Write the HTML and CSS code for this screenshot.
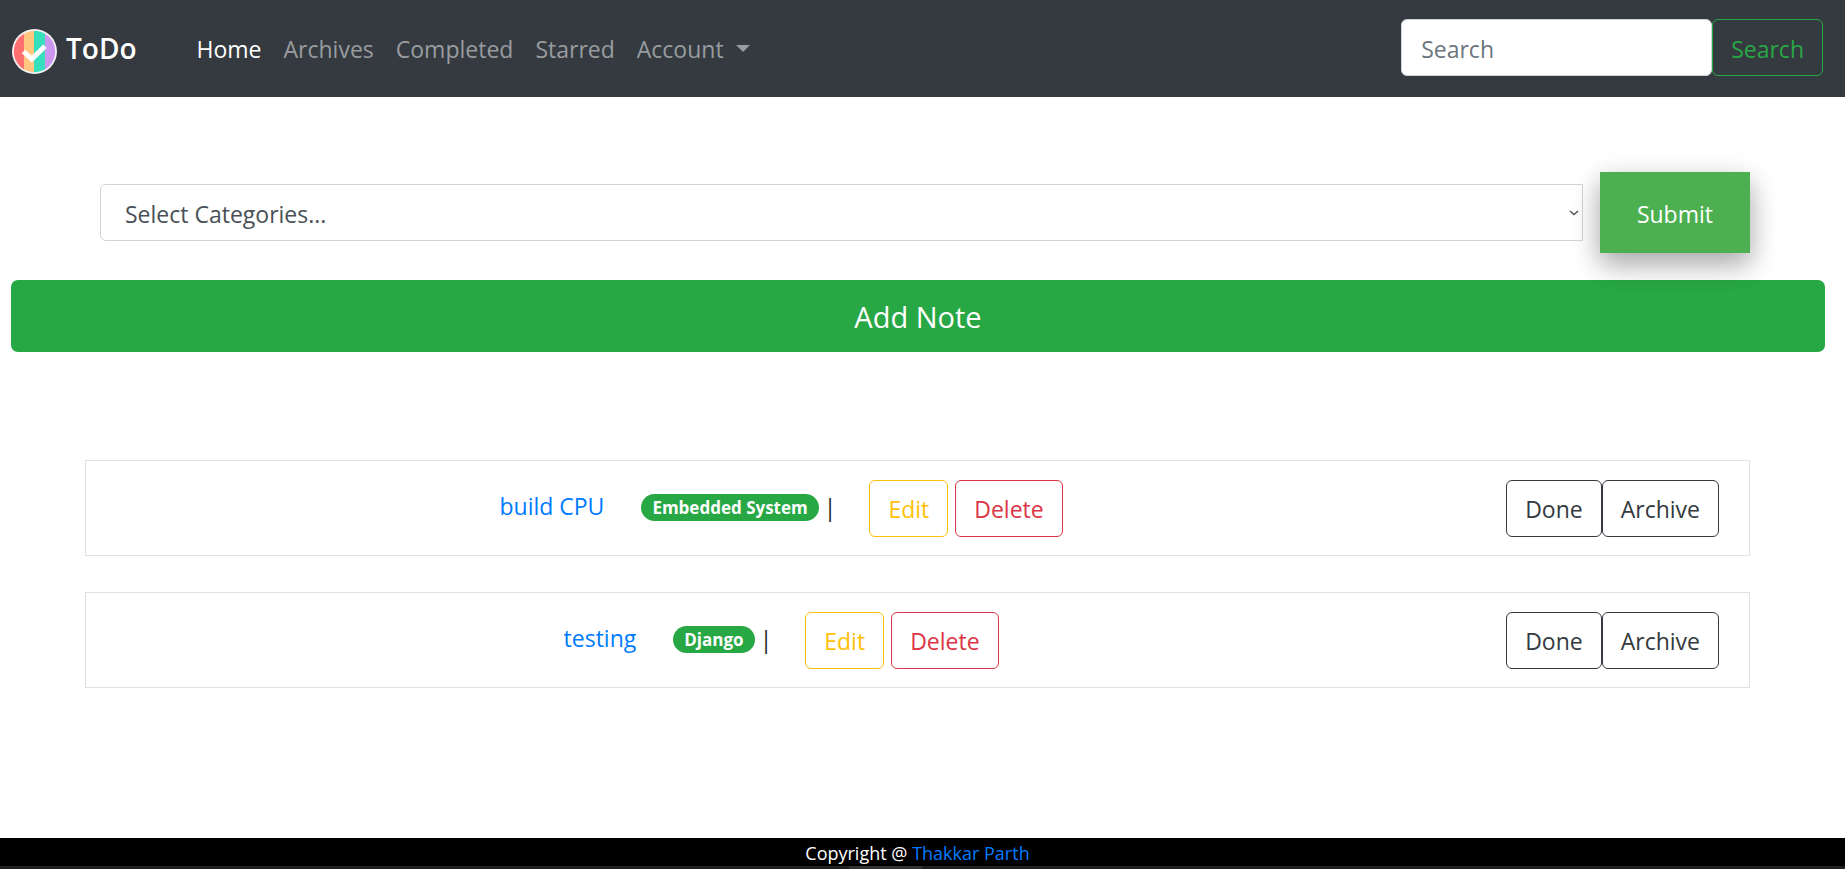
FILE: index.html
```html
<!DOCTYPE html>
<html lang="en">
<head>
<meta charset="utf-8">
<meta name="viewport" content="width=device-width, initial-scale=1">
<title>ToDo</title>
<link rel="stylesheet" href="styles.css">
</head>
<body>
<header class="navbar">
  <a class="brand" href="#">
    <svg class="brand-logo" viewBox="0 0 45 45" aria-hidden="true">
      <defs><clipPath id="disc"><circle cx="22.5" cy="22.5" r="20.7"/></clipPath></defs>
      <circle cx="22.5" cy="22.5" r="22.5" fill="#f4f1f3"/>
      <g clip-path="url(#disc)">
        <rect width="12" height="45" fill="#ff6f6f"/>
        <rect x="12" width="10" height="45" fill="#ffc77f"/>
        <rect x="22" width="11" height="45" fill="#37e0bd"/>
        <rect x="33" width="12" height="45" fill="#cb97ee"/>
      </g>
      <path d="M11.5 22.5 L19.8 30 L33 17.3" fill="none" stroke="#fff" stroke-width="5"/>
    </svg>
    <span>ToDo</span>
  </a>
  <nav class="nav">
    <a class="nav-link active" href="#">Home</a>
    <a class="nav-link" href="#">Archives</a>
    <a class="nav-link" href="#">Completed</a>
    <a class="nav-link" href="#">Starred</a>
    <a class="nav-link dropdown" href="#">Account</a>
  </nav>
  <form class="search">
    <input class="search-input" type="search" placeholder="Search" aria-label="Search">
    <button class="btn btn-success" type="button">Search</button>
  </form>
</header>

<main class="main">
  <form class="filter">
    <div class="select-wrap">
      <select class="select" aria-label="Categories">
        <option>Select Categories...</option>
        <option>Embedded System</option>
        <option>Django</option>
      </select>
      <svg class="chevron" viewBox="0 0 10 6" aria-hidden="true"><path d="M1 1 L5 4.6 L9 1" fill="none" stroke="#555" stroke-width="1.5"/></svg>
    </div>
    <button class="submit" type="button">Submit</button>
  </form>
  <button class="add-note" type="button">Add Note</button>

  <ul class="notes">
    <li class="note">
      <div class="note-body">
        <a class="note-title" href="#">build CPU</a>
        <span class="badge">Embedded System</span>
        <span class="divider">|</span>
        <button class="btn btn-warning" type="button">Edit</button>
        <button class="btn btn-danger" type="button">Delete</button>
      </div>
      <div class="note-actions">
        <button class="btn btn-dark" type="button">Done</button>
        <button class="btn btn-dark" type="button">Archive</button>
      </div>
    </li>
    <li class="note">
      <div class="note-body">
        <a class="note-title" href="#">testing</a>
        <span class="badge">Django</span>
        <span class="divider">|</span>
        <button class="btn btn-warning" type="button">Edit</button>
        <button class="btn btn-danger" type="button">Delete</button>
      </div>
      <div class="note-actions">
        <button class="btn btn-dark" type="button">Done</button>
        <button class="btn btn-dark" type="button">Archive</button>
      </div>
    </li>
  </ul>
</main>

<footer class="footer">
  <p class="copyright">Copyright @ <a class="author" href="#">Thakkar Parth</a></p>
  <div class="track"><div class="thumb"></div></div>
</footer>
</body>
</html>
```
FILE: styles.css
```css
*,
*::before,
*::after {
  box-sizing: border-box;
}

body {
  margin: 0;
  min-height: 100vh;
  display: flex;
  flex-direction: column;
  background: #fff;
  color: #212529;
  font-family: "Open Sans", "Noto Sans", sans-serif;
  font-size: 23px;
  line-height: 36px;
}

a {
  color: #007bff;
  text-decoration: none;
}

button,
input,
select {
  font: inherit;
  margin: 0;
}

.navbar {
  display: flex;
  align-items: center;
  padding: 19px 22px 21px 12px;
  background: #343a40;
}

.brand {
  display: flex;
  align-items: center;
  gap: 9px;
  margin-right: 60px;
  color: #fff;
  font-size: 28px;
  font-weight: 600;
}

.brand-logo {
  width: 45px;
  height: 45px;
  margin-top: 7px;
}

.nav {
  display: flex;
  flex: 1;
  gap: 22px;
  padding-top: 2px;
}

.nav-link {
  color: #999c9f;
}

.nav-link.active {
  color: #fff;
}

.dropdown::after {
  content: "";
  display: inline-block;
  margin-left: 12px;
  vertical-align: 6px;
  border-top: 7px solid;
  border-left: 7px solid transparent;
  border-right: 7px solid transparent;
}

.search {
  display: flex;
}

.search-input {
  width: 311px;
  height: 57px;
  padding: 2px 19px 0;
  border: 1px solid #ced4da;
  border-radius: 6px;
  background: #fff;
  color: #495057;
}

.search-input::placeholder {
  color: #6c757d;
  opacity: 1;
}

.btn {
  height: 57px;
  padding: 0 18px;
  border: 1px solid;
  border-radius: 6px;
  background: transparent;
}

.btn-success {
  padding-top: 2px;
  color: #28a745;
}

.btn-warning {
  margin-left: 33px;
  color: #ffc107;
}

.btn-danger {
  margin-left: 7px;
  color: #dc3545;
}

.btn-dark {
  color: #343a40;
}

.main {
  flex: 1;
  padding: 75px 20px 36px 11px;
}

.filter {
  display: flex;
  align-items: center;
  gap: 17px;
  margin: 0 75px 27px 89px;
}

.select-wrap {
  position: relative;
  flex: 1;
}

.select {
  display: block;
  width: 100%;
  height: 57px;
  padding: 2px 24px 0;
  appearance: none;
  border: 1px solid #ced4da;
  border-radius: 6px 0 0 6px;
  background: #fff;
  color: #495057;
}

.chevron {
  position: absolute;
  top: 26px;
  right: 4px;
  width: 10px;
  height: 6px;
}

.submit {
  z-index: 1;
  height: 81px;
  padding: 2px 37px 0;
  border: 0;
  background: #4caf50;
  color: #fff;
  box-shadow: 0 12px 24px rgba(0, 0, 0, 0.2), 0 9px 30px rgba(0, 0, 0, 0.19);
}

.add-note {
  display: block;
  width: 100%;
  height: 72px;
  padding: 2px 0 0;
  border: 0;
  border-radius: 7px;
  background: #28a745;
  color: #fff;
  font-size: 29px;
}

.notes {
  display: grid;
  gap: 36px;
  margin: 108px 75px 0 74px;
  padding: 0;
  list-style: none;
}

.note {
  display: flex;
  align-items: center;
  padding: 19px 0 18px;
  border: 1px solid #dee2e6;
}

.note-body {
  display: flex;
  flex: 1;
  align-items: center;
  justify-content: center;
}

.note-title {
  padding-bottom: 6px;
}

.badge {
  margin: 0 5px 2px 37px;
  padding: 0 11px;
  border-radius: 14px;
  background: #28a745;
  color: #fff;
  font-size: 17px;
  font-weight: 700;
  line-height: 27px;
}

.divider {
  padding-bottom: 4px;
}

.note-actions {
  display: flex;
  padding: 0 30px;
}

.footer {
  background: #000;
  color: #fff;
  font-size: 18px;
  text-align: center;
}

.copyright {
  margin: 0;
  padding: 2px 10px 0 0;
  line-height: 26px;
}

.track {
  height: 3px;
  padding-left: 46%;
  background: #1f2020;
}

.thumb {
  width: 73px;
  height: 3px;
  background: #303234;
}
```
